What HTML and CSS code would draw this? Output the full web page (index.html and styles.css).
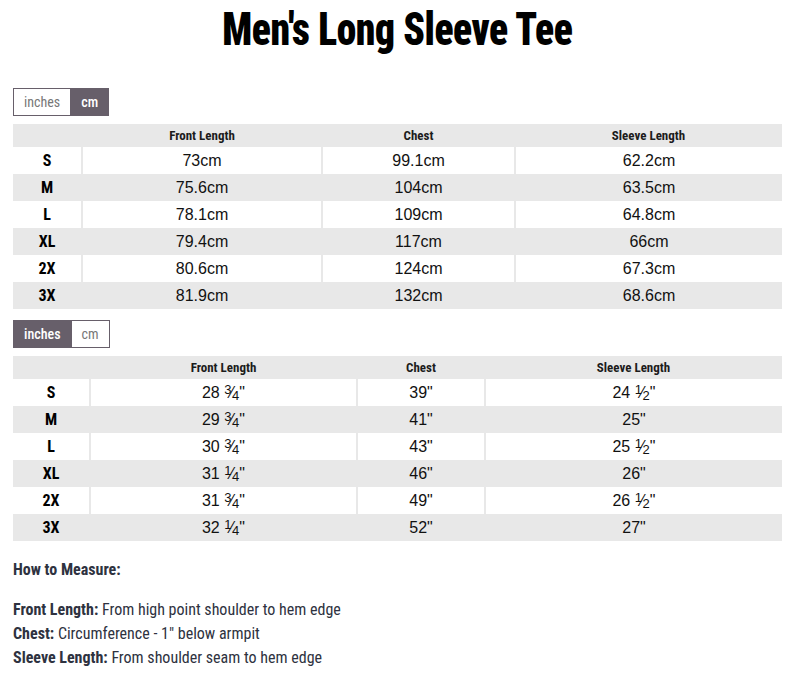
FILE: index.html
```html
<!DOCTYPE html>
<html>
<head>
<meta charset="utf-8">
<link rel="stylesheet" href="styles.css">
</head>
<body>
<div class="page">
  <h1 class="title"><span class="title-text">Men's Long Sleeve Tee</span></h1>

  <div class="toggle">
    <span class="tbtn">inches</span><span class="tbtn active">cm</span>
  </div>
  <table class="chart chart-cm">
    <colgroup><col class="c1"><col class="c2"><col class="c3"><col class="c4"></colgroup>
    <thead>
      <tr><th></th><th>Front Length</th><th>Chest</th><th>Sleeve Length</th></tr>
    </thead>
    <tbody>
      <tr><td class="size">S</td><td>73cm</td><td>99.1cm</td><td>62.2cm</td></tr>
      <tr><td class="size">M</td><td>75.6cm</td><td>104cm</td><td>63.5cm</td></tr>
      <tr><td class="size">L</td><td>78.1cm</td><td>109cm</td><td>64.8cm</td></tr>
      <tr><td class="size">XL</td><td>79.4cm</td><td>117cm</td><td>66cm</td></tr>
      <tr><td class="size">2X</td><td>80.6cm</td><td>124cm</td><td>67.3cm</td></tr>
      <tr><td class="size">3X</td><td>81.9cm</td><td>132cm</td><td>68.6cm</td></tr>
    </tbody>
  </table>

  <div class="toggle toggle-2">
    <span class="tbtn active">inches</span><span class="tbtn">cm</span>
  </div>
  <table class="chart chart-in">
    <colgroup><col class="d1"><col class="d2"><col class="d3"><col class="d4"></colgroup>
    <thead>
      <tr><th></th><th>Front Length</th><th>Chest</th><th>Sleeve Length</th></tr>
    </thead>
    <tbody>
      <tr><td class="size">S</td><td>28 <sup>3</sup><span class="sl">&frasl;</span><sub>4</sub>"</td><td>39"</td><td>24 <sup>1</sup><span class="sl">&frasl;</span><sub>2</sub>"</td></tr>
      <tr><td class="size">M</td><td>29 <sup>3</sup><span class="sl">&frasl;</span><sub>4</sub>"</td><td>41"</td><td>25"</td></tr>
      <tr><td class="size">L</td><td>30 <sup>3</sup><span class="sl">&frasl;</span><sub>4</sub>"</td><td>43"</td><td>25 <sup>1</sup><span class="sl">&frasl;</span><sub>2</sub>"</td></tr>
      <tr><td class="size">XL</td><td>31 <sup>1</sup><span class="sl">&frasl;</span><sub>4</sub>"</td><td>46"</td><td>26"</td></tr>
      <tr><td class="size">2X</td><td>31 <sup>3</sup><span class="sl">&frasl;</span><sub>4</sub>"</td><td>49"</td><td>26 <sup>1</sup><span class="sl">&frasl;</span><sub>2</sub>"</td></tr>
      <tr><td class="size">3X</td><td>32 <sup>1</sup><span class="sl">&frasl;</span><sub>4</sub>"</td><td>52"</td><td>27"</td></tr>
    </tbody>
  </table>

  <div class="measure">
    <p class="measure-title">How to Measure:</p>
    <p class="measure-list">
      <b>Front Length:</b> From high point shoulder to hem edge<br>
      <b>Chest:</b> Circumference - 1" below armpit<br>
      <b>Sleeve Length:</b> From shoulder seam to hem edge
    </p>
  </div>
</div>
</body>
</html>
```

FILE: styles.css
```css
html, body {
  margin: 0;
  padding: 0;
  background: #fff;
}

.page {
  padding: 0 12px 0 13px;
  font-family: "Roboto", "Liberation Sans", sans-serif;
  font-stretch: condensed;
  color: #2e3240;
}

.title {
  margin: 0;
  height: 82px;
  text-align: center;
  font-family: "Roboto", sans-serif;
  font-weight: 900;
  font-size: 47px;
  line-height: 56px;
  color: #000;
  padding-top: 1px;
  box-sizing: border-box;
}

.title-text {
  display: inline-block;
  transform: scaleX(0.84);
  letter-spacing: -0.5px;
}

.toggle {
  display: flex;
  margin-top: 6px;
}

.toggle-2 {
  margin-top: 11px;
}

.tbtn {
  box-sizing: border-box;
  height: 28px;
  line-height: 26px;
  padding: 0 10px;
  border: 1px solid #675f6a;
  font-size: 14px;
  color: #777;
  background: #fff;
}

.tbtn + .tbtn {
  border-left: 0;
}

.tbtn.active {
  background: #675f6a;
  color: #fff;
  font-weight: 500;
}

.chart {
  width: 769px;
  margin-top: 8px;
  border-collapse: collapse;
  table-layout: fixed;
}

.c1 { width: 69px; }
.c2 { width: 240px; }
.c3 { width: 193px; }
.c4 { width: 267px; }

.d1 { width: 77px; }
.d2 { width: 267px; }
.d3 { width: 128px; }
.d4 { width: 297px; }

.chart th {
  background: #e8e8e8;
  height: 23px;
  padding: 0;
  font-size: 13px;
  font-weight: 700;
  color: #1c1c1c;
  text-align: center;
}

.chart td {
  height: 27px;
  padding: 0;
  text-align: center;
  font-family: "Liberation Sans", Arial, sans-serif;
  font-stretch: normal;
  font-size: 16px;
  color: #111;
  border-left: 2px solid #e8e8e8;
  box-sizing: border-box;
}

.chart td:first-child {
  border-left: 0;
}

.chart td.size {
  font-family: "Roboto", sans-serif;
  font-stretch: condensed;
  font-weight: 700;
  font-size: 16px;
  color: #000;
}

.chart tbody tr:nth-child(even) td {
  background: #e8e8e8;
}

.chart sup, .chart sub {
  font-size: 13px;
  line-height: 0;
}

.chart sup { vertical-align: 4px; }
.chart sub { vertical-align: -2px; }

.chart .sl {
  font-size: 16px;
  margin: 0 -1px;
}

.measure {
  margin-top: 17px;
  font-size: 16px;
  line-height: 24px;
}

.measure p {
  margin: 0;
}

.measure-title {
  font-weight: 700;
  margin-bottom: 16px !important;
}

.measure b {
  font-weight: 700;
}
```
